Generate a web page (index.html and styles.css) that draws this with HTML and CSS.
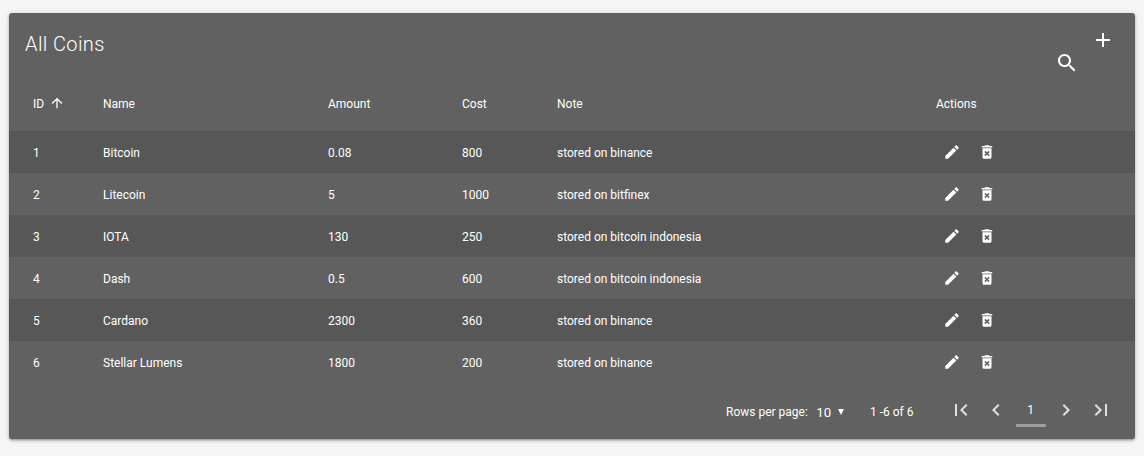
FILE: index.html
```html
<!DOCTYPE html>
<html lang="en">
<head>
<meta charset="utf-8">
<title>All Coins</title>
<link rel="stylesheet" href="styles.css">
</head>
<body>
<svg class="defs" aria-hidden="true">
  <symbol id="add" viewBox="0 0 24 24"><path d="M19 13h-6v6h-2v-6H5v-2h6V5h2v6h6v2z"/></symbol>
  <symbol id="search" viewBox="0 0 24 24"><path d="M15.5 14h-.79l-.28-.27C15.41 12.59 16 11.11 16 9.5 16 5.91 13.09 3 9.5 3S3 5.91 3 9.5 5.91 16 9.5 16c1.61 0 3.09-.59 4.23-1.57l.27.28v.79l5 4.99L20.49 19l-4.99-5zm-6 0C7.01 14 5 11.99 5 9.5S7.01 5 9.5 5 14 7.01 14 9.5 11.99 14 9.5 14z"/></symbol>
  <symbol id="up" viewBox="0 0 24 24"><path d="M4 12l1.41 1.41L11 7.83V20h2V7.83l5.58 5.59L20 12l-8-8-8 8z"/></symbol>
  <symbol id="edit" viewBox="0 0 24 24"><path d="M3 17.25V21h3.75L17.81 9.94l-3.75-3.75L3 17.25zM20.71 7.04c.39-.39.39-1.02 0-1.41l-2.34-2.34c-.39-.39-1.02-.39-1.41 0l-1.83 1.83 3.75 3.75 1.83-1.83z"/></symbol>
  <symbol id="delete" viewBox="0 0 24 24"><path fill-rule="evenodd" d="M6 19c0 1.1.9 2 2 2h8c1.1 0 2-.9 2-2V7H6v12zm2.46-7.12l1.41-1.41L12 12.59l2.12-2.12 1.41 1.41L13.41 14l2.12 2.12-1.41 1.41L12 15.41l-2.12 2.12-1.41-1.41L10.59 14l-2.13-2.12zM15.5 4l-1-1h-5l-1 1H5v2h14V4z"/></symbol>
  <symbol id="first" viewBox="0 0 24 24"><path d="M18.41 16.59L13.82 12l4.59-4.59L17 6l-6 6 6 6zM6 6h2v12H6z"/></symbol>
  <symbol id="prev" viewBox="0 0 24 24"><path d="M15.41 7.41L14 6l-6 6 6 6 1.41-1.41L10.83 12z"/></symbol>
  <symbol id="next" viewBox="0 0 24 24"><path d="M10 6L8.59 7.41 13.17 12l-4.58 4.59L10 18l6-6z"/></symbol>
  <symbol id="last" viewBox="0 0 24 24"><path d="M5.59 7.41L10.18 12l-4.59 4.59L7 18l6-6-6-6zM16 6h2v12h-2z"/></symbol>
</svg>
<main class="card">
  <header class="card-header">
    <h1 class="title">All Coins</h1>
    <svg class="icon search"><use href="#search"/></svg>
    <svg class="icon add"><use href="#add"/></svg>
  </header>
  <div class="row head"><span class="sorted">ID<svg class="sort"><use href="#up"/></svg></span><span>Name</span><span>Amount</span><span>Cost</span><span>Note</span><span>Actions</span></div>
  <div class="row"><span>1</span><span>Bitcoin</span><span>0.08</span><span>800</span><span>stored on binance</span><span class="actions"><svg><use href="#edit"/></svg><svg><use href="#delete"/></svg></span></div>
  <div class="row"><span>2</span><span>Litecoin</span><span>5</span><span>1000</span><span>stored on bitfinex</span><span class="actions"><svg><use href="#edit"/></svg><svg><use href="#delete"/></svg></span></div>
  <div class="row"><span>3</span><span>IOTA</span><span>130</span><span>250</span><span>stored on bitcoin indonesia</span><span class="actions"><svg><use href="#edit"/></svg><svg><use href="#delete"/></svg></span></div>
  <div class="row"><span>4</span><span>Dash</span><span>0.5</span><span>600</span><span>stored on bitcoin indonesia</span><span class="actions"><svg><use href="#edit"/></svg><svg><use href="#delete"/></svg></span></div>
  <div class="row"><span>5</span><span>Cardano</span><span>2300</span><span>360</span><span>stored on binance</span><span class="actions"><svg><use href="#edit"/></svg><svg><use href="#delete"/></svg></span></div>
  <div class="row"><span>6</span><span>Stellar Lumens</span><span>1800</span><span>200</span><span>stored on binance</span><span class="actions"><svg><use href="#edit"/></svg><svg><use href="#delete"/></svg></span></div>
  <footer class="footer">
    <span>Rows per page:</span>
    <span class="size">10<svg class="caret" viewBox="0 0 6 6"><path d="M0 0h6L3 6z"/></svg></span>
    <span class="range">1 -6 of 6</span>
    <nav class="pager">
      <svg class="icon"><use href="#first"/></svg>
      <svg class="icon"><use href="#prev"/></svg>
      <span class="page">1</span>
      <svg class="icon"><use href="#next"/></svg>
      <svg class="icon"><use href="#last"/></svg>
    </nav>
  </footer>
</main>
</body>
</html>
```
FILE: styles.css
```css
* { box-sizing: border-box; }
body { margin: 0; padding: 13px 9px; background: #f5f5f5; font: 12px/18px Roboto, sans-serif; color: #fff; }
.defs { display: none; }
svg { fill: currentColor; flex: none; }
.card { width: 1126px; height: 426px; background: #616161; border-radius: 3px; overflow: hidden; box-shadow: 0 1px 5px rgba(0,0,0,.2), 0 2px 2px rgba(0,0,0,.14), 0 1px 1px rgba(0,0,0,.12); }
.card-header { height: 70px; display: flex; align-items: flex-start; padding: 15px 20px 0 16px; }
.title { margin: 0; font-size: 20px; line-height: 32px; font-weight: 300; letter-spacing: .4px; flex: 1; }
.icon { width: 24px; height: 24px; }
.search { margin: 23px 12px 0 0; }
.row { display: grid; grid-template-columns: 70px 225px 134px 95px 379px 1fr; height: 42px; padding: 2px 24px 0; align-items: center; }
.row:nth-of-type(even) { background: #575757; }
.head { height: 48px; padding: 0 24px 6px; }
.sorted { display: flex; align-items: center; }
.sort { width: 16px; height: 16px; margin: -2px 0 0 5px; }
.actions { display: flex; gap: 17px; padding-left: 7px; margin-top: -2px; }
.actions svg { width: 18px; height: 18px; }
.footer { display: flex; align-items: flex-start; padding: 20px 22px 0 717px; white-space: nowrap; }
.size { font-size: 13.33px; margin: 1px 0 0 8.5px; }
.caret { width: 6px; height: 6px; margin-left: 6.7px; vertical-align: 2px; }
.range { margin-left: 26px; }
.pager { display: flex; margin: -5px 0 0 35px; gap: 11px; }
.pager .icon { color: #e0e0e0; }
.page { width: 30px; height: 29px; text-align: center; line-height: 24px; border-bottom: 3px solid #9e9e9e; margin: 0 -3px; }
```
